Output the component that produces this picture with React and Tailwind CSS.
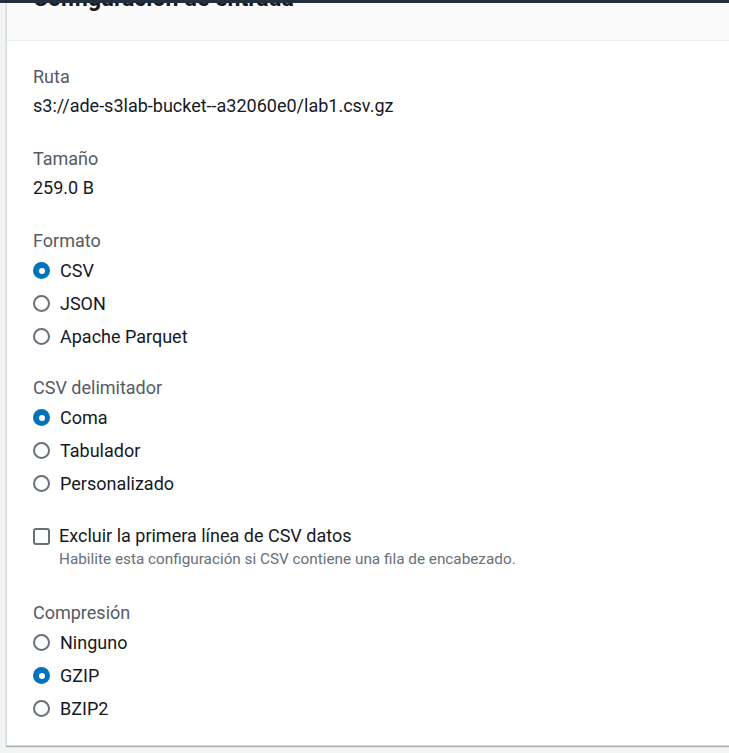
import React, { useState } from "react";

function Radio({ label, checked, onClick }) {
  return (
    <label className="flex items-center h-[33px] cursor-pointer" onClick={onClick}>
      <span
        className={`w-[17px] h-[17px] rounded-full flex items-center justify-center ${
          checked ? "bg-[#0073bb]" : "border-2 border-[#687078] bg-white"
        }`}
      >
        {checked && <span className="w-[6px] h-[6px] rounded-full bg-white" />}
      </span>
      <span className="ml-[10px] text-[18px] text-[#16191f]">{label}</span>
    </label>
  );
}

function RadioGroup({ title, options, value, onChange }) {
  return (
    <div>
      <div className="text-[18px] text-[#545b64] h-[30px] leading-[30px]">{title}</div>
      <div className="-mt-[2px]">
        {options.map((o) => (
          <Radio key={o} label={o} checked={value === o} onClick={() => onChange(o)} />
        ))}
      </div>
    </div>
  );
}

export default function App() {
  const [formato, setFormato] = useState("CSV");
  const [delim, setDelim] = useState("Coma");
  const [comp, setComp] = useState("GZIP");
  const [excluir, setExcluir] = useState(false);

  return (
    <div className="w-[729px] h-[753px] bg-[#f2f3f3] overflow-hidden" style={{ fontFamily: "Roboto, 'Liberation Sans', sans-serif" }}>
      <div className="h-[3px] bg-[#232f3e]" />
      <div className="ml-[6px] h-[743px] bg-white border-l border-b border-[#d5dbdb] shadow-[0_1px_1px_rgba(0,28,36,0.3)]">
        {/* header, title scrolled out of view */}
        <div className="h-[38px] bg-[#fafafa] border-b border-[#eaeded] overflow-hidden px-[26px]">
          <h2 className="text-[23px] font-bold text-[#16191f] leading-[26px] -mt-[17px]">Configuración de entrada</h2>
        </div>

        <div className="px-[26px] pt-[21px]">
          <div>
            <div className="text-[18px] text-[#545b64] leading-[29px]">Ruta</div>
            <div className="text-[18px] text-[#16191f] leading-[29px]">s3://ade-s3lab-bucket--a32060e0/lab1.csv.gz</div>
          </div>

          <div className="mt-[24px]">
            <div className="text-[18px] text-[#545b64] leading-[29px]">Tamaño</div>
            <div className="text-[18px] text-[#16191f] leading-[29px]">259.0 B</div>
          </div>

          <div className="mt-[24px]">
            <RadioGroup title="Formato" options={["CSV", "JSON", "Apache Parquet"]} value={formato} onChange={setFormato} />
          </div>

          <div className="mt-[20px]">
            <RadioGroup title="CSV delimitador" options={["Coma", "Tabulador", "Personalizado"]} value={delim} onChange={setDelim} />
          </div>

          <div className="mt-[23px] flex items-start">
            <button
              onClick={() => setExcluir(!excluir)}
              className={`mt-[5px] w-[17px] h-[17px] rounded-[3px] border-2 ${excluir ? "bg-[#0073bb] border-[#0073bb]" : "border-[#687078] bg-white"}`}
            />
            <div className="ml-[9px]">
              <div className="text-[18px] text-[#16191f] leading-[26px]">Excluir la primera línea de CSV datos</div>
              <div className="text-[15.3px] text-[#687078] leading-[20px]">Habilite esta configuración si CSV contiene una fila de encabezado.</div>
            </div>
          </div>

          <div className="mt-[29px]">
            <RadioGroup title="Compresión" options={["Ninguno", "GZIP", "BZIP2"]} value={comp} onChange={setComp} />
          </div>
        </div>
      </div>
    </div>
  );
}
